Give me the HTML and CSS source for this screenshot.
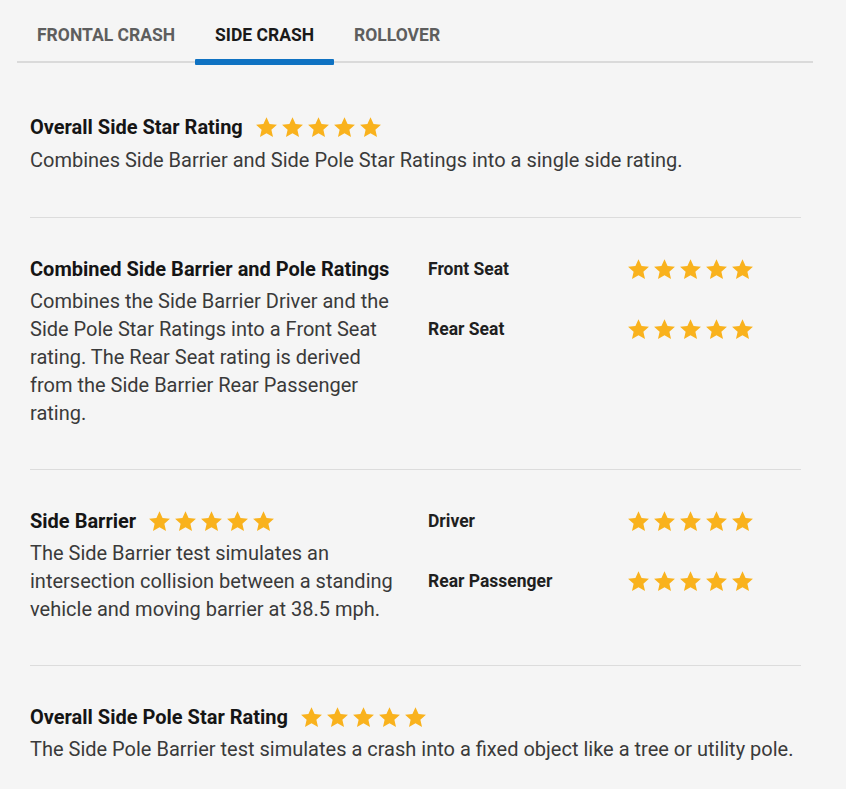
FILE: index.html
```
<!DOCTYPE html>
<html><head>
	<title>Side Crash Ratings</title>
	<link rel="stylesheet" href="styles.css">
</head>
<body>
<svg class="defs" width="0" height="0">
	<symbol id="star" viewBox="0 0 24 24"><path d="M12 1.2l3.2 7.1 7.7.8-5.8 5.2 1.7 7.6L12 18l-6.8 3.9 1.7-7.6L1.1 9.1l7.7-.8z"/></symbol>
</svg>
<nav class="tabs">
	<a class="tab">FRONTAL CRASH</a>
	<a class="tab active">SIDE CRASH</a>
	<a class="tab">ROLLOVER</a>
</nav>
<div class="content">
	<section class="rating first">
		<div class="info">
			<h3>Overall Side Star Rating <span class="stars"><svg><use href="#star"/></svg><svg><use href="#star"/></svg><svg><use href="#star"/></svg><svg><use href="#star"/></svg><svg><use href="#star"/></svg></span></h3>
			<p>Combines Side Barrier and Side Pole Star Ratings into a single side rating.</p>
		</div>
	</section>
	<section class="rating split">
		<div class="info">
			<h3>Combined Side Barrier and Pole Ratings</h3>
			<p>Combines the Side Barrier Driver and the Side Pole Star Ratings into a Front Seat rating. The Rear Seat rating is derived from the Side Barrier Rear Passenger rating.</p>
		</div>
		<ul class="seats">
			<li><strong>Front Seat</strong> <span class="stars"><svg><use href="#star"/></svg><svg><use href="#star"/></svg><svg><use href="#star"/></svg><svg><use href="#star"/></svg><svg><use href="#star"/></svg></span></li>
			<li><strong>Rear Seat</strong> <span class="stars"><svg><use href="#star"/></svg><svg><use href="#star"/></svg><svg><use href="#star"/></svg><svg><use href="#star"/></svg><svg><use href="#star"/></svg></span></li>
		</ul>
	</section>
	<section class="rating split">
		<div class="info">
			<h3>Side Barrier <span class="stars"><svg><use href="#star"/></svg><svg><use href="#star"/></svg><svg><use href="#star"/></svg><svg><use href="#star"/></svg><svg><use href="#star"/></svg></span></h3>
			<p>The Side Barrier test simulates an intersection collision between a standing vehicle and moving barrier at 38.5 mph.</p>
		</div>
		<ul class="seats">
			<li><strong>Driver</strong> <span class="stars"><svg><use href="#star"/></svg><svg><use href="#star"/></svg><svg><use href="#star"/></svg><svg><use href="#star"/></svg><svg><use href="#star"/></svg></span></li>
			<li><strong>Rear Passenger</strong> <span class="stars"><svg><use href="#star"/></svg><svg><use href="#star"/></svg><svg><use href="#star"/></svg><svg><use href="#star"/></svg><svg><use href="#star"/></svg></span></li>
		</ul>
	</section>
	<section class="rating last">
		<div class="info">
			<h3>Overall Side Pole Star Rating <span class="stars"><svg><use href="#star"/></svg><svg><use href="#star"/></svg><svg><use href="#star"/></svg><svg><use href="#star"/></svg><svg><use href="#star"/></svg></span></h3>
			<p>The Side Pole Barrier test simulates a crash into a fixed object like a tree or utility pole.</p>
		</div>
	</section>
</div>
</body>
</html>
```
FILE: styles.css
```
body {
	margin: 0;
	background-color: #f5f5f5;
	color: #333333;
	font-family: Roboto, "Liberation Sans", sans-serif;
}
.defs {
	position: absolute;
}
.tabs {
	display: flex;
	margin: 0 33px 0 17px;
	padding-top: 19px;
	border-bottom: 2px solid #dadada;
}
.tab {
	position: relative;
	padding: 6px 20px 16px;
	font-size: 17.5px;
	font-weight: 700;
	line-height: 20px;
	color: #5e5e5e;
}
.tab.active {
	color: #1a1a1a;
}
.tab.active::after {
	content: "";
	position: absolute;
	left: 0;
	right: 0;
	bottom: -4px;
	height: 6px;
	border-radius: 1px;
	background-color: #0f72c2;
}
.content {
	margin: 0 45px 0 30px;
	padding-top: 12px;
}
.rating {
	display: flex;
	padding: 37px 0 42px;
	border-bottom: 1px solid #dcdcdc;
}
.rating.first {
	padding: 38px 0 43px;
}
.rating.first h3 {
	margin-bottom: 5px;
}
.rating.last {
	border-bottom: none;
}
.info {
	width: 370px;
}
.rating:not(.split) .info {
	width: auto;
}
h3 {
	display: flex;
	align-items: center;
	margin: 0 0 4px;
	font-size: 20px;
	line-height: 28px;
	color: #151515;
}
p {
	margin: 0;
	font-size: 20px;
	line-height: 28px;
	color: #3a3a3a;
}
.stars {
	display: inline-flex;
	gap: 3px;
	margin-left: 12px;
	fill: #f9b21d;
}
.stars svg {
	width: 23px;
	height: 23px;
}
.seats {
	list-style: none;
	margin: 0 0 0 28px;
	padding: 0;
	display: flex;
	flex-direction: column;
	gap: 32px;
}
.seats li {
	display: flex;
	align-items: center;
	height: 28px;
}
.seats strong {
	width: 199px;
	font-size: 17.5px;
	color: #1f1f1f;
}
.seats .stars {
	margin-left: 0;
}
```
